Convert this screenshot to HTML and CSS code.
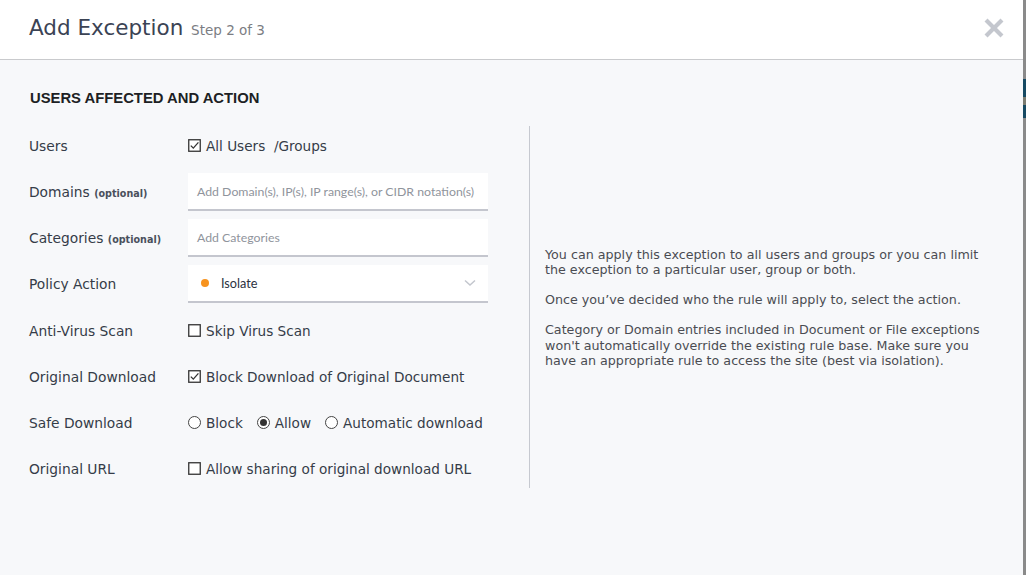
FILE: index.html
```html
<!DOCTYPE html>
<html>
<head>
<meta charset="utf-8">
<link rel="stylesheet" href="styles.css">
</head>
<body>
<div class="backdrop">
  <div class="modal">
    <div class="header">
      <div class="title">Add Exception <span class="step">Step 2 of 3</span></div>
      <svg class="close" width="20" height="20" viewBox="0 0 20 20"><path d="M3.5 3.5 L16.5 16.5 M16.5 3.5 L3.5 16.5" stroke="#c4c7ce" stroke-width="4.2" stroke-linecap="square"/></svg>
    </div>
    <div class="body">
      <h2 class="section-title">USERS AFFECTED AND ACTION</h2>
      <div class="content">
        <div class="form">
          <div class="row">
            <div class="label">Users</div>
            <div class="control"><span class="check checked"><svg width="13" height="13" viewBox="0 0 13 13"><rect x="0.75" y="0.75" width="11.5" height="11.5" fill="#fff" stroke="#333" stroke-width="1.3"/><path d="M2.8 6.6 L5.3 9.1 L10.4 3.4" fill="none" stroke="#333" stroke-width="1.3"/></svg></span>All Users &nbsp;/Groups</div>
          </div>
          <div class="row">
            <div class="label">Domains <span class="opt">(optional)</span></div>
            <div class="control"><div class="input placeholder">Add Domain(s), IP(s), IP range(s), or CIDR notation(s)</div></div>
          </div>
          <div class="row">
            <div class="label">Categories <span class="opt">(optional)</span></div>
            <div class="control"><div class="input placeholder">Add Categories</div></div>
          </div>
          <div class="row">
            <div class="label">Policy Action</div>
            <div class="control"><div class="input select"><span class="dot"></span><span class="sel-text">Isolate</span><svg class="chev" width="12" height="8" viewBox="0 0 12 8"><path d="M1 1.5 L6 6 L11 1.5" fill="none" stroke="#c3c6cd" stroke-width="1.5"/></svg></div></div>
          </div>
          <div class="row">
            <div class="label">Anti-Virus Scan</div>
            <div class="control"><span class="check"><svg width="13" height="13" viewBox="0 0 13 13"><rect x="0.75" y="0.75" width="11.5" height="11.5" fill="#fff" stroke="#333" stroke-width="1.3"/></svg></span>Skip Virus Scan</div>
          </div>
          <div class="row">
            <div class="label">Original Download</div>
            <div class="control"><span class="check"><svg width="13" height="13" viewBox="0 0 13 13"><rect x="0.75" y="0.75" width="11.5" height="11.5" fill="#fff" stroke="#333" stroke-width="1.3"/><path d="M2.8 6.6 L5.3 9.1 L10.4 3.4" fill="none" stroke="#333" stroke-width="1.3"/></svg></span>Block Download of Original Document</div>
          </div>
          <div class="row">
            <div class="label">Safe Download</div>
            <div class="control radios">
              <span class="radio-opt"><span class="radio"></span>Block</span>
              <span class="radio-opt"><span class="radio on"></span>Allow</span>
              <span class="radio-opt"><span class="radio"></span>Automatic download</span>
            </div>
          </div>
          <div class="row">
            <div class="label">Original URL</div>
            <div class="control"><span class="check"><svg width="13" height="13" viewBox="0 0 13 13"><rect x="0.75" y="0.75" width="11.5" height="11.5" fill="#fff" stroke="#333" stroke-width="1.3"/></svg></span>Allow sharing of original download URL</div>
          </div>
        </div>
        <div class="divider"></div>
        <div class="help">
          <p>You can apply this exception to all users and groups or you can limit the exception to a particular user, group or both.</p>
          <p>Once you’ve decided who the rule will apply to, select the action.</p>
          <p>Category or Domain entries included in Document or File exceptions won't automatically override the existing rule base. Make sure you have an appropriate rule to access the site (best via isolation).</p>
        </div>
      </div>
    </div>
  </div>
  <div class="strip">
    <div class="s-blue"></div>
    <div class="s-grey"></div>
    <div class="s-blue2"></div>
  </div>
</div>
</body>
</html>
```
FILE: styles.css
```css
* { box-sizing: border-box; }
html, body { margin: 0; padding: 0; }
body {
  width: 1026px;
  height: 575px;
  overflow: hidden;
  background: #808080;
  font-family: "DejaVu Sans", Verdana, sans-serif;
}
.backdrop {
  display: flex;
  height: 575px;
}
.modal {
  width: 1023px;
  height: 575px;
  background: #f7f8fa;
  display: flex;
  flex-direction: column;
}
.header {
  height: 60px;
  background: #fff;
  border-bottom: 1px solid #c9cacd;
  display: flex;
  align-items: center;
  justify-content: space-between;
  padding: 0 19px 4px 29px;
}
.title {
  font-size: 21.5px;
  color: #3b4354;
}
.step {
  font-size: 13.5px;
  color: #7b7d83;
  margin-left: 1px;
}
.close { display: block; margin-top: 1px; }
.body {
  padding: 29px 0 0 30px;
}
.section-title {
  margin: 0;
  font-family: "Liberation Sans", Arial, sans-serif;
  font-weight: bold;
  font-size: 14.8px;
  line-height: 18px;
  color: #1d1f24;
}
.content {
  display: flex;
  margin-top: 16px;
}
.form {
  width: 500px;
  margin-left: -1px;
}
.row {
  height: 46.15px;
  display: flex;
  align-items: center;
}
.label {
  width: 159px;
  font-size: 13.8px;
  color: #353c48;
  white-space: nowrap;
}
.opt {
  font-size: 9.6px;
  font-weight: bold;
  color: #4a505c;
}
.control {
  flex: 1;
  display: flex;
  align-items: center;
  font-size: 13.6px;
  color: #353c48;
  white-space: nowrap;
}
.check {
  display: inline-flex;
  width: 13px;
  height: 13px;
  margin-right: 5px;
  margin-top: -1px;
}
.input {
  width: 300px;
  height: 38px;
  background: #fff;
  border-bottom: 2px solid #c4c6ce;
  display: flex;
  align-items: center;
  padding-left: 9px;
  font-family: Lato, "Open Sans", sans-serif;
  font-size: 12.3px;
}
.placeholder { color: #8f949c; }
.select {
  padding-left: 13px;
  padding-right: 12px;
  color: #2b3140;
  font-size: 12.7px;
}
.dot {
  width: 8px;
  height: 8px;
  border-radius: 50%;
  background: #f7931e;
  margin-right: 12px;
}
.sel-text { flex: 1; }
.chev { display: block; }
.radio-opt {
  display: inline-flex;
  align-items: center;
  margin-right: 14px;
}
.radio {
  width: 13px;
  height: 13px;
  border-radius: 50%;
  border: 1px solid #444;
  background: #fff;
  margin-right: 5px;
  display: inline-flex;
  align-items: center;
  justify-content: center;
}
.radio.on::after {
  content: "";
  width: 7px;
  height: 7px;
  border-radius: 50%;
  background: #333;
}
.divider {
  width: 1px;
  background: #c6c9d0;
  margin: 3px 0 4px 0;
}
.help {
  width: 450px;
  padding-left: 15px;
  display: flex;
  flex-direction: column;
  justify-content: center;
  font-size: 12.7px;
  line-height: 15.3px;
  color: #4a4c52;
}
.help p { margin: 0 0 14.8px 0; }
.help p:last-child { margin-bottom: 0; }
.strip {
  width: 3px;
  height: 575px;
  background: #8a8a8a;
  padding-top: 79px;
}
.s-blue { height: 18px; background: #174a63; }
.s-grey { height: 8px; background: #7c7c70; }
.s-blue2 { height: 13px; background: #174a63; }
```
